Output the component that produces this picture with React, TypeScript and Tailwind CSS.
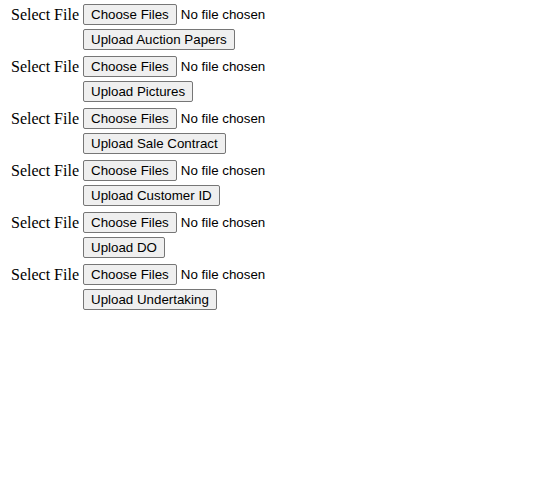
import React from 'react';

const uploads = [
  'Upload Auction Papers',
  'Upload Pictures',
  'Upload Sale Contract',
  'Upload Customer ID',
  'Upload DO',
  'Upload Undertaking',
];

const btn =
  'h-[21px] px-[7px] bg-[#efefef] border border-[#767676] rounded-[2px] text-[13.333px] leading-none text-black font-["Liberation_Sans",Arial,sans-serif] whitespace-nowrap';

const UploadBlock: React.FC<{ label: string }> = ({ label }) => {
  return (
    <div className="flex flex-col gap-[4px] py-[3px]">
      <div className="flex items-center h-[21px]">
        <span className="w-[83px] pl-[11px] text-[16px] text-black font-['Liberation_Serif','Times_New_Roman',serif] whitespace-nowrap">
          Select File
        </span>
        <button className={btn}>Choose Files</button>
        <span className="ml-[4px] text-[13.333px] text-black font-['Liberation_Sans',Arial,sans-serif] whitespace-nowrap">
          No file chosen
        </span>
      </div>
      <div className="flex items-center h-[21px]">
        <span className="w-[83px]" />
        <button className={btn}>{label}</button>
      </div>
    </div>
  );
};

export default function App() {
  return (
    <div className="w-[554px] h-[487px] bg-white pt-[1px]">
      {uploads.map((u) => (
        <UploadBlock key={u} label={u} />
      ))}
    </div>
  );
}
